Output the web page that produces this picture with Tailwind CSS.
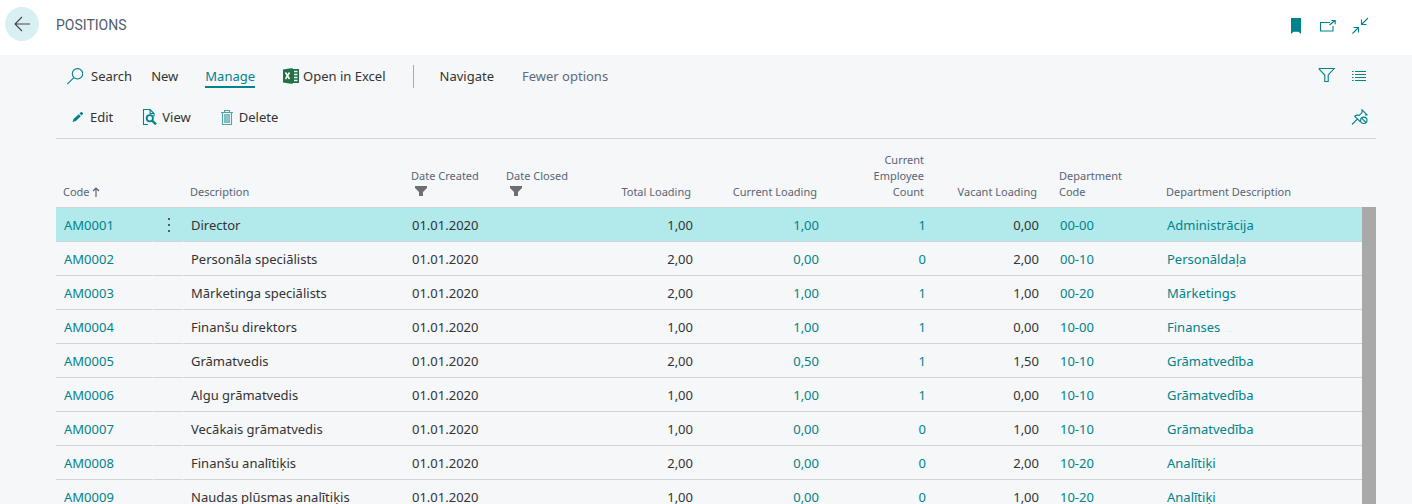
<!DOCTYPE html>
<html lang="en">
<head>
<meta charset="utf-8">
<meta name="viewport" content="width=device-width, initial-scale=1">
<title>Positions</title>
<script src="https://cdn.jsdelivr.net/npm/@tailwindcss/browser@4"></script>
</head>
<body class="bg-[#f5f7f9]">
<div class="flex h-screen flex-col overflow-hidden bg-[#f5f7f9] font-['Noto_Sans',sans-serif] text-[13px] leading-5 text-[#333333]">

  <header class="flex h-[55px] shrink-0 items-start bg-white pr-[42px] pl-[5px]">
    <button type="button" aria-label="Back" class="mt-[7px] flex size-[34px] items-center justify-center rounded-full bg-[#d9f0f2]">
      <svg class="size-[34px]" viewBox="0 0 34 34" fill="none" stroke="#444" stroke-width="1.100"><path d="M25 17H9.800M17 10l-7 7 7 7"/></svg>
    </button>
    <h1 class="mt-[15px] ml-[17px] font-['Roboto',sans-serif] text-[14px] leading-5 font-normal text-[#505c6d]">POSITIONS</h1>
    <div class="mt-4 ml-auto flex gap-3">
      <button type="button" aria-label="Bookmark" class="size-5"><svg class="size-5" viewBox="0 0 20 20" fill="#00838a"><path d="M5 2h10v16l-2.500-2.200h-5L5 18z"/></svg></button>
      <button type="button" aria-label="Open in new window" class="size-5"><svg class="size-5" viewBox="0 0 20 20" fill="none" stroke="#00838a" stroke-width="1.100"><path d="M12 6.500H2.500v8.500h12.500v-5M11.500 9l5.500-4.500M13.500 4.500h3.700v3.700"/></svg></button>
      <button type="button" aria-label="Collapse" class="size-5"><svg class="size-5" viewBox="0 0 20 20" fill="none" stroke="#00838a" stroke-width="1.100"><path d="M18 2l-6.500 6.500M11.500 3.500v5h5M2.500 17.500l6-6M3.500 11.500h5v5"/></svg></button>
    </div>
  </header>

  <main class="flex min-h-0 grow flex-col pr-9 pl-14">
    <div class="flex h-[42px] shrink-0 items-center pr-1.5 pl-2.5">
      <button type="button" class="flex items-center gap-2">
        <svg class="size-[17px]" viewBox="0 0 17 17" fill="none" stroke="#00838a" stroke-width="1.100"><circle cx="11.500" cy="5.800" r="5.200"/><path d="M7.800 9.600L1.300 16.100"/></svg>
        Search</button>
      <button type="button" class="ml-[19px]">New</button>
      <button type="button" class="ml-[27px] h-[23px] border-b-2 border-[#00838a] pt-px text-[#00838a]">Manage</button>
      <button type="button" class="ml-7 flex items-center gap-1">
        <svg class="size-4" viewBox="0 0 16 16"><path d="M9 1h7v14H9z" fill="#217346"/><path d="M11 3.500H14.500M11 6.500H14.500M11 9.500H14.500M11 12.500H14.500" stroke="#f5f7f9" stroke-width="1.600"/><path d="M0 1.500L9.500 0v16L0 14.500z" fill="#217346"/><path d="M2.500 4.500L6.500 11M6.500 4.500L2.500 11" stroke="#fff" stroke-width="1.600"/></svg>
        Open in Excel</button>
      <div class="ml-[27px] h-[23px] w-px bg-[#a5abb4]"></div>
      <button type="button" class="ml-[26px]">Navigate</button>
      <button type="button" class="ml-7 text-[#606b7b]">Fewer options</button>
      <div class="ml-auto flex gap-3">
        <button type="button" aria-label="Filter" class="size-5"><svg class="size-5" viewBox="0 0 20 20" fill="none" stroke="#00838a" stroke-width="1.100"><path d="M.7 2.500h15.500L10.200 9v6.500H6.800V9L.9 2.800"/></svg></button>
        <button type="button" aria-label="List view" class="size-5"><svg class="size-5" viewBox="0 0 20 20" fill="none" stroke="#00838a"><path d="M2 5.500h1.500M2 8.500h1.500M2 11.500h1.500M2 14.500h1.500M5 5.500h11M5 8.500h11M5 11.500h11M5 14.500h11"/></svg></button>
      </div>
    </div>

    <div class="flex h-[42px] shrink-0 items-center border-b border-[#d3d7db] pr-1.5 pb-0.5 pl-4">
      <button type="button" class="flex items-center gap-1.5">
        <svg class="size-3" viewBox="0 0 12 12" fill="#00838a"><path d="M.5 11l1-3L6.800 3.200 8.800 5.200 3.800 10zM7.500 2.500L9 1c.6-.6 2.600 1.200 2 1.900L9.500 4.500z"/></svg>
        Edit</button>
      <button type="button" class="ml-[29px] flex items-center gap-1">
        <svg class="size-4" viewBox="0 0 16 16" fill="none" stroke="#00838a"><path d="M6 15.500H1.500V.5H8l4 4v3M8 .8v3.700h3.700" stroke-width="1.100"/><circle cx="7.800" cy="9.300" r="3.100" stroke-width="1.800"/><path d="M10 11.500l4 3.900" stroke-width="2.400"/></svg>
        View</button>
      <button type="button" class="ml-7 flex items-center gap-1">
        <svg class="size-4" viewBox="0 0 16 16" fill="none" stroke="#4fa5aa" stroke-width="1.100"><path d="M2 3.500h12M5.500 3.500v-2h5v2M3.500 3.500v12h9v-12"/><path d="M5.500 5.500h5v8h-5z" fill="#8cc3c7" stroke="#7dbbbf"/></svg>
        Delete</button>
      <button type="button" aria-label="Unpin" class="ml-auto size-5"><svg class="size-5" viewBox="0 0 20 20" fill="none" stroke="#00838a" stroke-width="1.100"><path d="M2 17.500l5.300-5.300M4.500 9l5.800 5.800M4.700 9.200c1.500-1.200 3-1.400 4.600-.8L12 5.500V2.800l5 5-2 .2"/><circle cx="13.800" cy="13.300" r="3.200"/><path d="M11.600 11.100l4.400 4.400"/></svg></button>
    </div>

    <div class="flex">
      <table class="w-full table-fixed border-separate border-spacing-0 text-left">
        <colgroup>
          <col class="w-[98px]"><col class="w-[29px]"><col class="w-[221px]"><col class="w-[95px]"><col class="w-[95px]"><col class="w-[106px]"><col class="w-[126px]"><col class="w-[107px]"><col class="w-[119px]"><col class="w-[107px]"><col>
        </colgroup>
        <thead class="text-[11px] leading-4 text-[#5a6575]">
          <tr class="align-bottom *:h-[69px] *:border-b *:border-[#d0d4d8] *:px-[7px] *:pb-[7px] *:font-normal">
            <th scope="col">Code <svg class="inline h-2.5 w-2 align-[-1px]" viewBox="0 0 8 10" fill="none" stroke="#505c6d" stroke-width="1.100"><path d="M4 10V1M1 4l3-3 3 3"/></svg></th>
            <th scope="col" aria-label="Row menu"></th>
            <th scope="col">Description</th>
            <th scope="col">Date Created<svg class="ml-1 h-4 w-3" viewBox="0 0 12 16" fill="#6e6e6e"><path d="M0 2h12v2L8 8v4H4V8L0 4z"/></svg></th>
            <th scope="col">Date Closed<svg class="ml-1 h-4 w-3" viewBox="0 0 12 16" fill="#6e6e6e"><path d="M0 2h12v2L8 8v4H4V8L0 4z"/></svg></th>
            <th scope="col" class="pr-[9px]! text-right">Total Loading</th>
            <th scope="col" class="pr-[9px]! text-right">Current Loading</th>
            <th scope="col" class="pr-[9px]! text-right">Current<br>Employee<br>Count</th>
            <th scope="col" class="pr-[15px]! text-right whitespace-nowrap">Vacant Loading</th>
            <th scope="col">Department<br>Code</th>
            <th scope="col">Department Description</th>
          </tr>
        </thead>
        <tbody id="rows"></tbody>
      </table>
      <div class="mt-[68px] w-3.5 shrink-0 bg-[#a9a9a9]"></div>
    </div>
  </main>
</div>

<script>
const positions = [
  ['AM0001','Director','1,00','1,00','1','0,00','00-00','Administrācija'],
  ['AM0002','Personāla speciālists','2,00','0,00','0','2,00','00-10','Personāldaļa'],
  ['AM0003','Mārketinga speciālists','2,00','1,00','1','1,00','00-20','Mārketings'],
  ['AM0004','Finanšu direktors','1,00','1,00','1','0,00','10-00','Finanses'],
  ['AM0005','Grāmatvedis','2,00','0,50','1','1,50','10-10','Grāmatvedība'],
  ['AM0006','Algu grāmatvedis','1,00','1,00','1','0,00','10-10','Grāmatvedība'],
  ['AM0007','Vecākais grāmatvedis','1,00','0,00','0','1,00','10-10','Grāmatvedība'],
  ['AM0008','Finanšu analītiķis','2,00','0,00','0','2,00','10-20','Analītiķi'],
  ['AM0009','Naudas plūsmas analītiķis','1,00','0,00','0','1,00','10-20','Analītiķi'],
];
const gap = 'relative after:absolute after:right-0 after:-bottom-px after:size-px after:bg-[#f5f7f9]';
const link = t => `<a href="#" class="text-[#00838a]">${t}</a>`;
document.getElementById('rows').innerHTML = positions.map(([code, desc, total, current, count, vacant, dept, deptDesc], i) => `
  <tr class="${i === 0 ? 'bg-[#b2e9eb]' : ''} *:h-[34px] *:border-b *:border-[#d0d4d8] *:pt-px *:pr-[7px] *:pb-px *:pl-2 *:whitespace-nowrap">
    <td class="${gap}">${link(code)}</td>
    <td class="${gap}">${i === 0 ? '<button type="button" aria-label="Show more options" class="flex w-full justify-center"><svg class="h-4 w-1" viewBox="0 0 4 16" fill="#505c6d"><path d="M1 1h2v2H1zM1 7h2v2H1zM1 13h2v2H1z"/></svg></button>' : ''}</td>
    <td>${desc}</td>
    <td>01.01.2020</td>
    <td></td>
    <td class="text-right">${total}</td>
    <td class="text-right">${link(current)}</td>
    <td class="text-right">${link(count)}</td>
    <td class="pr-[13px]! text-right">${vacant}</td>
    <td>${link(dept)}</td>
    <td>${link(deptDesc)}</td>
  </tr>`).join('');
</script>
</body>
</html>
